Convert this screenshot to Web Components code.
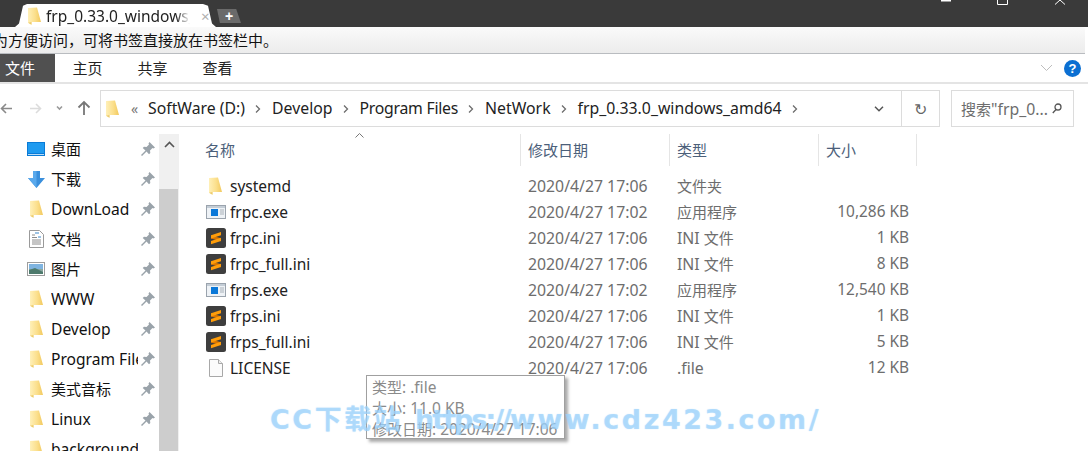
<!DOCTYPE html>
<html lang="zh">
<head>
<meta charset="utf-8">
<title>frp_0.33.0_windows_amd64</title>
<style>
  html, body { margin: 0; height: 451px; overflow: hidden; background: #fff; }
  body { font-family: "Noto Sans", "Noto Sans CJK SC", sans-serif; position: relative; }
</style>
</head>
<body>
<browser-tabs title-text="frp_0.33.0_windows_amd64"></browser-tabs>
<bookmark-hint>为方便访问，可将书签直接放在书签栏中。</bookmark-hint>
<ribbon-tabs></ribbon-tabs>
<address-row></address-row>
<explorer-body>
  <nav-pane slot="nav">
    <nav-item icon="desktop">桌面</nav-item>
    <nav-item icon="download">下载</nav-item>
    <nav-item icon="folder">DownLoad</nav-item>
    <nav-item icon="doc">文档</nav-item>
    <nav-item icon="picture">图片</nav-item>
    <nav-item icon="folder">WWW</nav-item>
    <nav-item icon="folder">Develop</nav-item>
    <nav-item icon="folder">Program Files</nav-item>
    <nav-item icon="folder">美式音标</nav-item>
    <nav-item icon="folder">Linux</nav-item>
    <nav-item icon="folder" nopin>background</nav-item>
  </nav-pane>
  <file-list slot="files">
    <file-row icon="folder" name="systemd" date="2020/4/27 17:06" type="文件夹"></file-row>
    <file-row icon="exe" name="frpc.exe" date="2020/4/27 17:02" type="应用程序" size="10,286 KB"></file-row>
    <file-row icon="sublime" name="frpc.ini" date="2020/4/27 17:06" type="INI 文件" size="1 KB"></file-row>
    <file-row icon="sublime" name="frpc_full.ini" date="2020/4/27 17:06" type="INI 文件" size="8 KB"></file-row>
    <file-row icon="exe" name="frps.exe" date="2020/4/27 17:02" type="应用程序" size="12,540 KB"></file-row>
    <file-row icon="sublime" name="frps.ini" date="2020/4/27 17:06" type="INI 文件" size="1 KB"></file-row>
    <file-row icon="sublime" name="frps_full.ini" date="2020/4/27 17:06" type="INI 文件" size="5 KB"></file-row>
    <file-row icon="blank" name="LICENSE" date="2020/4/27 17:06" type=".file" size="12 KB"></file-row>
  </file-list>
</explorer-body>
<file-tooltip>
  <div>类型: .file</div>
  <div>大小: 11.0 KB</div>
  <div>修改日期: 2020/4/27 17:06</div>
</file-tooltip>
<water-mark>CC下载站 <span style="letter-spacing:-2px">https://</span>www.cdz423.com/</water-mark>

<script>
const FOLDER_FILL = `<linearGradient id="fg" x1="0" x2="1" y1="0" y2="0"><stop offset="0" stop-color="#fff0b8"/><stop offset=".55" stop-color="#fbdf8c"/><stop offset="1" stop-color="#f2c95e"/></linearGradient>`;
const ICONS = {
  folder: `<svg width="13" height="18" viewBox="0 0 13 18"><defs>${FOLDER_FILL}</defs><path d="M0 1 9 .5 13 15H3.500V17.800L0 15.800Z" fill="url(#fg)"/><path d="M3.500 15V17.800L0 15.800Z" fill="#eccb6e"/></svg>`,
  desktop: `<svg width="18" height="14" viewBox="0 0 18 14"><rect width="18" height="14" fill="#0a7bd6"/><rect x="1" y="1" width="16" height="10" fill="#1f9bf0"/><rect x="1" y="12" width="16" height="1" fill="#b8dcf8"/></svg>`,
  download: `<svg width="17" height="17" viewBox="0 0 17 17"><path d="M5 0h7v7h5L8.500 17 0 7h5Z" fill="#3a8fdc"/><path d="M5 0h3.500v17L0 7h5Z" fill="#5aa9ec"/></svg>`,
  doc: `<svg width="15" height="18" viewBox="0 0 15 18"><path d="M.5.500h10l4 4v13H.5Z" fill="#fff" stroke="#9a9a9a"/><path d="M3 5h3M3 7.500h5M3 10h9M3 12h9M3 14h9" stroke="#8c8c8c"/><path d="M6 3h4M9 7h3" stroke="#3a86c8"/></svg>`,
  picture: `<svg width="18" height="14" viewBox="0 0 18 14"><rect x=".5" y=".5" width="17" height="13" fill="#fff" stroke="#9d9d9d"/><rect x="2" y="2" width="14" height="5" fill="#7fb4e0"/><rect x="2" y="7" width="14" height="5" fill="#8aa7a0"/><path d="M2 8 8 6l8 4v2H2Z" fill="#4d7a6c"/></svg>`,
  exe: `<svg width="20" height="14" viewBox="0 0 20 14"><rect x=".5" y=".5" width="19" height="13" fill="#eef2f6" stroke="#9aa3ad"/><rect x="1" y="1" width="18" height="2" fill="#c4cdd6"/><rect x="5" y="4" width="7" height="7" fill="#0b78d8"/><path d="M14 5h4M14 7h4M14 9h4" stroke="#a8b0b8"/></svg>`,
  sublime: `<svg width="20" height="20" viewBox="0 0 20 20"><rect width="20" height="20" rx="2.500" fill="#3e3e3e"/><path d="M5 7.500V10.500L15 13.200V10.200Z" fill="#d97500"/><path d="M5 7.300 15 4V7.200L5 10.500Z" fill="#ff9d0a"/><path d="M5 13 15 9.800V13L5 16.300Z" fill="#ff9d0a"/></svg>`,
  blank: `<svg width="14" height="18" viewBox="0 0 14 18"><path d="M.5.500h9l4 4v13H.5Z" fill="#fbfbfb" stroke="#a8a8a8"/><path d="M9.500.500v4h4" fill="#eee" stroke="#a8a8a8"/></svg>`,
  pin: `<svg width="14" height="14" viewBox="0 0 14 14"><path d="M8.500 0 14 5.500l-1.500 1-1-.5-2.500 2.500.3 2.500-1.300 1.300-2.500-2.800L1 14 0 13l4.500-4.500L1.700 6l1.300-1.300 2.500.3L8 2.500l-.5-1Z" fill="#9aa3aa"/></svg>`
};

function mount(el, html) {
  el.attachShadow({ mode: 'open' }).innerHTML = html;
}

// latin runs are set larger than CJK runs, the original font is wider than Noto for latin
function mix(text) {
  return text.replace(/[\u4e00-\u9fff]+/g, m => `<span style="font-size:15px">${m}</span>`);
}

class BrowserTabs extends HTMLElement {
  connectedCallback() {
    mount(this, `
      <style>
        :host { display: flex; height: 27px; background: #3a3a3a; overflow: hidden; padding-left: 15px; }
        .tab {
          width: 201px; flex: none; margin-top: 4px; background: #fff; display: flex; align-items: center;
          padding-left: 13px; box-sizing: border-box; color: #222; font-size: 15.500px; gap: 5px;
          clip-path: polygon(0 100%, 4px 85%, 8px 8%, 12px 0, 188px 0, 193px 8%, 197px 85%, 201px 100%);
        }
        .tab svg { flex: none; }
        .name { width: 144px; overflow: hidden; white-space: nowrap; flex: none;
          -webkit-mask-image: linear-gradient(90deg, #000 130px, transparent 144px); }
        .x { color: #b0b0b0; font-size: 15px; margin-left: 6px; }
        .plus { width: 24px; height: 14px; margin: 9px 0 0 1px; background: #6a6a6a; color: #fff; font: bold 14px/14px "Liberation Sans", sans-serif; text-align: center; clip-path: polygon(0 0, 80% 0, 100% 100%, 12% 100%); }
        .win { margin-left: auto; display: block; flex: none; }
      </style>
      <div class="tab">${ICONS.folder}<span class="name">${this.getAttribute('title-text')}</span><span class="x">×</span></div>
      <div class="plus">+</div>
      <svg class="win" width="147" height="27" viewBox="0 0 147 27" fill="none" stroke="#fff">
        <path d="M0 0.500H10" stroke-width="2"/>
        <path d="M56.500 -3H66.500V4.500H56.500Z"/>
        <path d="M114 4.500 119 0 124 4.500"/>
      </svg>`);
  }
}

class BookmarkHint extends HTMLElement {
  connectedCallback() {
    mount(this, `
      <style>
        :host { display: block; height: 26px; width: 1085px; border-bottom: 1px solid #b9bcc0; border-top-right-radius: 3px;
          background: linear-gradient(#fafafa, #ececec); overflow: hidden; font-size: 15px; line-height: 26px; color: #111; white-space: nowrap; }
        div { margin-left: -7px; }
      </style>
      <div><slot></slot></div>`);
  }
}

class RibbonTabs extends HTMLElement {
  connectedCallback() {
    mount(this, `
      <style>
        :host { display: flex; height: 30px; box-sizing: border-box; border-bottom: 2px solid #e4e4e4; font-size: 15px; color: #222; align-items: flex-start; }
        .t { height: 28px; line-height: 28px; width: 65px; text-align: center; }
        .file { width: 55px; background: #505050; color: #fff; text-align: left; padding-left: 5px; box-sizing: border-box; }
        .right { margin-left: auto; display: flex; align-items: center; gap: 11px; height: 28px; padding-right: 7px; }
        .help { width: 17px; height: 17px; border-radius: 50%; background: #0b6fd2; color: #fff; font: bold 13px/17px "Liberation Sans", sans-serif; text-align: center; }
      </style>
      <div class="t file">文件</div>
      <div class="t">主页</div>
      <div class="t">共享</div>
      <div class="t">查看</div>
      <div class="right">
        <svg width="13" height="8" viewBox="0 0 13 8" fill="none" stroke="#bdbdbd"><path d="M1 1l5.500 5.500L12 1"/></svg>
        <div class="help">?</div>
      </div>`);
  }
}

class AddressRow extends HTMLElement {
  connectedCallback() {
    const chev = `<svg class="c" width="6" height="8" viewBox="0 0 6 8" fill="none" stroke="#6d6d6d" stroke-width="1.300"><path d="M1 .5 4.500 4 1 7.500"/></svg>`;
    const crumbs = ['SoftWare (D:)', 'Develop', 'Program Files', 'NetWork', 'frp_0.33.0_windows_amd64'];
    mount(this, `
      <style>
        :host { display: flex; height: 43px; box-sizing: border-box; padding-top: 6px; font-size: 15.800px; color: #222; }
        .nav { width: 100px; height: 37px; flex: none; display: block; }
        .box { height: 37px; box-sizing: border-box; border: 1px solid #dcdcdc; display: flex; align-items: center; }
        .addr { width: 840px; flex: none; padding-left: 5px; }
        .laquo { color: #777; margin: 0 8px 0 12px; font-size: 14px; width: 9px; }
        .crumb { white-space: nowrap; position: relative; top: -1px; }
        .crumb:nth-of-type(4) { letter-spacing: -.25px; }
        .c { margin: 0 11px 0 10px; flex: none; }
        .dd { margin-left: auto; width: 37px; height: 100%; border-left: 1px solid #dcdcdc; display: flex; align-items: center; justify-content: center; flex: none; color: #666; font-size: 16px; }
        .drop { margin-left: auto; margin-right: 17px; flex: none; }
        .search { width: 123px; margin-left: 11px; padding-left: 9px; flex: none; color: #6d6d6d; gap: 4px; white-space: nowrap; }
      </style>
      <svg class="nav" viewBox="0 0 100 37" fill="none" stroke-width="1.600">
        <path d="M12 18.500H1.500M6 14l-4.500 4.500L6 23" stroke="#8a8a8a"/>
        <path d="M30 18.500h10.500M36 14l4.500 4.500L36 23" stroke="#dcdcdc"/>
        <path d="M57 16.500l2.500 2.500 2.500-2.500" stroke="#9a9a9a"/>
        <path d="M84 25V12M78.500 17.500 84 12l5.500 5.500" stroke="#777" stroke-width="1.800"/>
      </svg>
      <div class="box addr">
        ${ICONS.folder}
        <span class="laquo">«</span>
        ${crumbs.map(t => `<span class="crumb">${t}</span>${chev}`).join('')}
        <svg class="drop" width="10" height="6" viewBox="0 0 10 6" fill="none" stroke="#555" stroke-width="1.500"><path d="M1 .8 5 4.800 9 .8"/></svg>
        <div class="dd" style="margin-left:0">↻</div>
      </div>
      <div class="box search"><span>${mix('搜索"frp_0...')}</span>
        <svg width="10" height="11" viewBox="0 0 10 11" fill="none" stroke="#555" stroke-width="1.300"><circle cx="6" cy="4" r="3"/><path d="M4 6.500.8 10"/></svg>
      </div>`);
  }
}

class ExplorerBody extends HTMLElement {
  connectedCallback() {
    mount(this, `
      <style>
        :host { display: flex; height: 324px; padding-top: 7px; box-sizing: border-box; overflow: hidden; }
        .bar { width: 20px; flex: none; background: #f0f0f0; margin-right: 1px; display: flex; flex-direction: column; }
        .up { height: 55px; display: flex; justify-content: center; padding-top: 7px; box-sizing: border-box; flex: none; }
        .thumb { flex: 1; background: #cdcdcd; margin-right: 1px; }
      </style>
      <slot name="nav"></slot>
      <div class="bar">
        <div class="up"><svg width="11" height="7" viewBox="0 0 11 7" fill="none" stroke="#555" stroke-width="1.600"><path d="M1 6 5.500 1.500 10 6"/></svg></div>
        <div class="thumb"></div>
      </div>
      <slot name="files"></slot>`);
  }
}

class NavPane extends HTMLElement {
  connectedCallback() {
    mount(this, `
      <style>:host { display: block; width: 159px; flex: none; }</style>
      <slot></slot>`);
  }
}

class NavItem extends HTMLElement {
  connectedCallback() {
    const icon = this.getAttribute('icon');
    this.innerHTML = mix(this.textContent);
    mount(this, `
      <style>
        :host { display: flex; align-items: center; height: 30px; padding-left: 27px; font-size: 15.600px; color: #111; }
        .i { width: 18px; flex: none; display: flex; justify-content: center; margin-right: 6px; }
        .l { width: 87px; overflow: hidden; white-space: nowrap; flex: none; line-height: 30px; }
        .p { margin-left: 3px; display: flex; flex: none; }
      </style>
      <span class="i">${ICONS[icon]}</span>
      <span class="l"><slot></slot></span>
      ${this.hasAttribute('nopin') ? '' : `<span class="p">${ICONS.pin}</span>`}`);
  }
}

class FileList extends HTMLElement {
  connectedCallback() {
    mount(this, `
      <style>
        :host { display: block; flex: 1; font-size: 15px; }
        .head { display: grid; grid-template-columns: 340px 149px 149px 99px; height: 32px; margin-bottom: 7px; color: #4c607a; position: relative; }
        .head div { line-height: 32px; padding-left: 7px; border-left: 1px solid #e5e5e5; }
        .head div:first-child { padding-left: 25px; border-left: 0; position: relative; }
        .head div:last-child { border-right: 1px solid #e5e5e5; }
        .sort { position: absolute; left: 175px; top: -1px; }
      </style>
      <div class="head">
        <div>名称<svg class="sort" width="9" height="5" viewBox="0 0 9 5" fill="none" stroke="#777"><path d="M.5 4.500 4.500 .5l4 4"/></svg></div>
        <div>修改日期</div><div>类型</div><div>大小</div>
      </div>
      <slot></slot>`);
  }
}

class FileRow extends HTMLElement {
  connectedCallback() {
    const a = n => this.getAttribute(n) || '';
    mount(this, `
      <style>
        :host { display: grid; grid-template-columns: 340px 149px 149px 99px; height: 26px; line-height: 26px; font-size: 15.800px; color: #6d6d6d; }
        .n { display: flex; align-items: center; padding-left: 25px; color: #222; font-size: 15.500px; }
        .i { width: 21px; flex: none; display: flex; justify-content: center; margin-right: 4px; }
        .d { padding-left: 8px; white-space: nowrap; }
        .s { text-align: right; padding-right: 8px; font-size: 15.400px; }
      </style>
      <div class="n"><span class="i">${ICONS[a('icon')]}</span>${a('name')}</div>
      <div class="d">${a('date')}</div>
      <div class="d">${mix(a('type'))}</div>
      <div class="s">${a('size')}</div>`);
  }
}

class FileTooltip extends HTMLElement {
  connectedCallback() {
    this.querySelectorAll('div').forEach(d => { d.innerHTML = mix(d.textContent); });
    mount(this, `
      <style>
        :host { position: absolute; left: 366px; top: 375px; width: 199px; height: 64px; box-sizing: border-box; background: #fff;
          border: 1px solid #a0a0a0; box-shadow: 3px 3px 3px #aaa; padding: 1px 5px 0; font-size: 15.500px; line-height: 21px; color: #8a8a8a; white-space: nowrap; overflow: hidden; }
      </style>
      <slot></slot>`);
  }
}

class WaterMark extends HTMLElement {
  connectedCallback() {
    mount(this, `
      <style>
        :host { position: absolute; left: 270px; top: 400px; font: bold 27px/40px "DejaVu Sans", "Noto Sans CJK SC", sans-serif; color: rgba(165, 215, 252, .66); text-shadow: 0 0 1px rgba(90, 175, 245, .4); letter-spacing: 2.500px; white-space: nowrap; }
      </style>
      <slot></slot>`);
  }
}

customElements.define('browser-tabs', BrowserTabs);
customElements.define('bookmark-hint', BookmarkHint);
customElements.define('ribbon-tabs', RibbonTabs);
customElements.define('address-row', AddressRow);
customElements.define('explorer-body', ExplorerBody);
customElements.define('nav-pane', NavPane);
customElements.define('nav-item', NavItem);
customElements.define('file-list', FileList);
customElements.define('file-row', FileRow);
customElements.define('file-tooltip', FileTooltip);
customElements.define('water-mark', WaterMark);
</script>
</body>
</html>
